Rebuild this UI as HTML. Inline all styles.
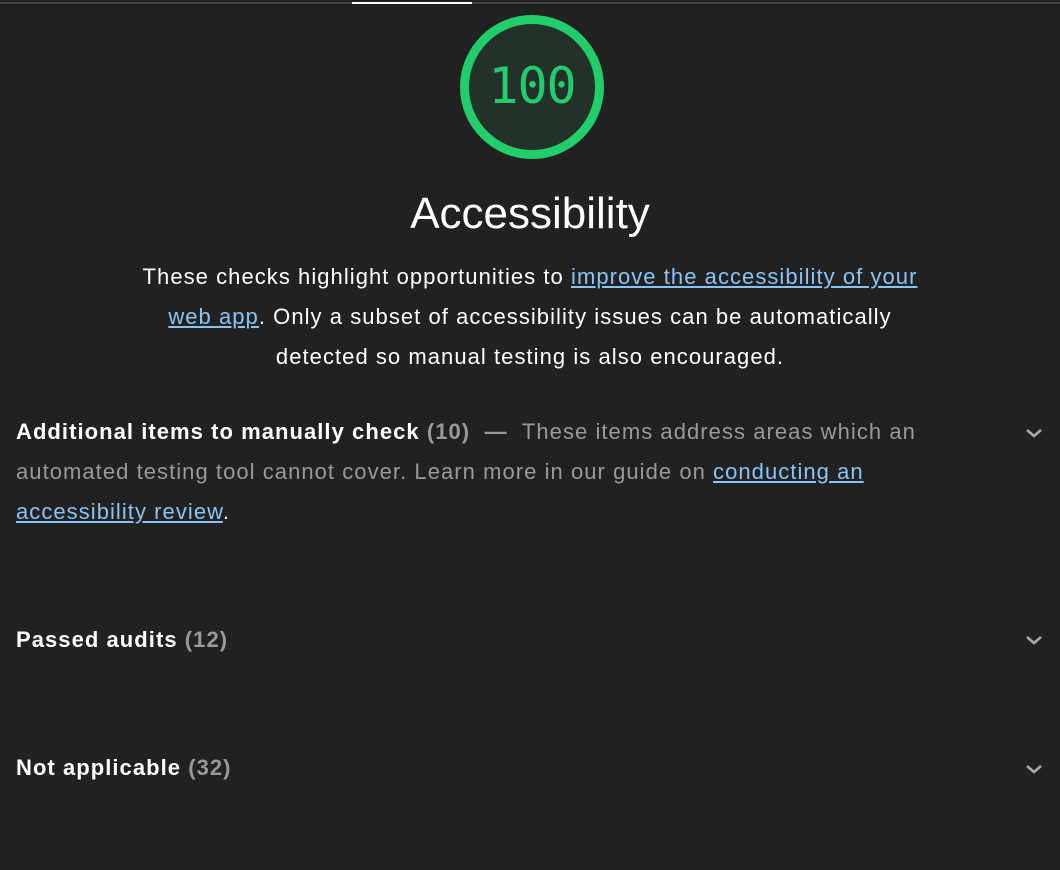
<!DOCTYPE html>
<html><head><meta charset="utf-8"><style>
html,body{margin:0;padding:0;background:#212121;width:1060px;height:870px;overflow:hidden;font-family:"Liberation Sans",Arial,sans-serif;color:#fff}
.bar{position:absolute;left:0;top:2px;width:1060px;height:2px;background:#444}
.bar i{position:absolute;left:352px;top:0;width:120px;height:2px;background:#fff}
.gauge{position:absolute;left:460px;top:15px;width:126px;height:126px;border:9px solid #22cd6b;border-radius:50%;background:#243128;}
.gauge span{position:absolute;left:0;right:0;top:36px;text-align:center;font-family:"DejaVu Sans Mono","Liberation Mono",monospace;font-size:50px;line-height:52px;color:#22cd6b;letter-spacing:-1px}
h1{position:absolute;left:0;width:1060px;top:189px;margin:0;text-align:center;font-weight:normal;font-size:44px;line-height:50px}
.desc{position:absolute;left:130px;width:800px;top:257px;text-align:center;font-size:22px;line-height:40px;letter-spacing:1.05px}
a{color:#89c4f4;text-decoration:underline}
.grp{position:absolute;left:16px;width:920px;font-size:22px;line-height:40px;color:#999;letter-spacing:1.05px}
.grp b{color:#fff}
.grp .c{font-weight:bold;color:#999}
.chev{position:absolute;left:1025px;width:18px;height:10px}
</style></head><body>
<div class="bar"><i></i></div>
<div class="gauge"><span>100</span></div>
<h1>Accessibility</h1>
<div class="desc">These checks highlight opportunities to <a>improve the accessibility of your web app</a>. Only a subset of accessibility issues can be automatically detected so manual testing is also encouraged.</div>
<div class="grp" style="top:412px"><b>Additional items to manually check</b> <span class="c">(10)</span> &nbsp;<b style="color:#999">—</b> &nbsp;These items address areas which an automated testing tool cannot cover. Learn more in our guide on <a>conducting an accessibility review</a><span style="color:#fff">.</span></div>
<div class="grp" style="top:620px"><b>Passed audits</b> <span class="c">(12)</span></div>
<div class="grp" style="top:748px"><b>Not applicable</b> <span class="c">(32)</span></div>
<svg class="chev" style="top:428px" viewBox="0 0 18 10"><path d="M2 2l7 6 7-6" stroke="#aaa" stroke-width="2.6" fill="none"/></svg>
<svg class="chev" style="top:635px" viewBox="0 0 18 10"><path d="M2 2l7 6 7-6" stroke="#aaa" stroke-width="2.6" fill="none"/></svg>
<svg class="chev" style="top:764px" viewBox="0 0 18 10"><path d="M2 2l7 6 7-6" stroke="#aaa" stroke-width="2.6" fill="none"/></svg>
</body></html>
